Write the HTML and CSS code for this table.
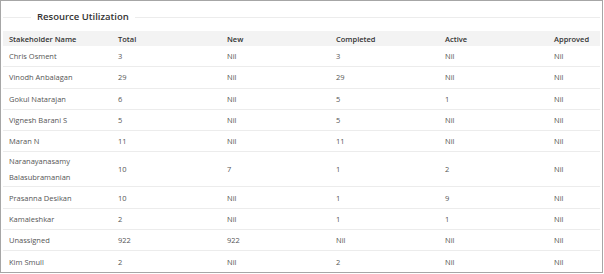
FILE: index.html
```html
<!DOCTYPE html>
<html>
<head>
<meta charset="utf-8">
<link rel="stylesheet" href="styles.css">
</head>
<body>
<div class="frame">
  <fieldset class="panel">
    <legend class="title">Resource Utilization</legend>
    <table class="grid">
      <colgroup>
        <col class="c"><col class="c"><col class="c"><col class="c"><col class="c"><col>
      </colgroup>
      <thead>
        <tr><th>Stakeholder Name</th><th>Total</th><th>New</th><th>Completed</th><th>Active</th><th>Approved</th></tr>
      </thead>
      <tbody>
        <tr><td>Chris Osment</td><td>3</td><td>Nil</td><td>3</td><td>Nil</td><td>Nil</td></tr>
        <tr><td>Vinodh Anbalagan</td><td>29</td><td>Nil</td><td>29</td><td>Nil</td><td>Nil</td></tr>
        <tr><td>Gokul Natarajan</td><td>6</td><td>Nil</td><td>5</td><td>1</td><td>Nil</td></tr>
        <tr><td>Vignesh Barani S</td><td>5</td><td>Nil</td><td>5</td><td>Nil</td><td>Nil</td></tr>
        <tr><td>Maran N</td><td>11</td><td>Nil</td><td>11</td><td>Nil</td><td>Nil</td></tr>
        <tr class="tall"><td>Naranayanasamy<br>Balasubramanian</td><td>10</td><td>7</td><td>1</td><td>2</td><td>Nil</td></tr>
        <tr><td>Prasanna Desikan</td><td>10</td><td>Nil</td><td>1</td><td>9</td><td>Nil</td></tr>
        <tr><td>Kamaleshkar</td><td>2</td><td>Nil</td><td>1</td><td>1</td><td>Nil</td></tr>
        <tr><td>Unassigned</td><td>922</td><td>922</td><td>Nil</td><td>Nil</td><td>Nil</td></tr>
        <tr><td>Kim Smull</td><td>2</td><td>Nil</td><td>2</td><td>Nil</td><td>Nil</td></tr>
      </tbody>
    </table>
  </fieldset>
</div>
</body>
</html>
```
FILE: styles.css
```css
html, body {
  margin: 0;
  padding: 0;
  background: #ffffff;
}
body {
  font-family: "Open Sans", "Noto Sans", sans-serif;
  width: 604px;
  height: 274px;
  overflow: hidden;
}
.frame {
  box-sizing: border-box;
  width: 603px;
  height: 273px;
  border: 1px solid #a6a6a6;
  padding: 0 2px;
  overflow: hidden;
}
.panel {
  margin: 0;
  padding: 0;
  border: none;
  border-top: 1px solid #ececec;
  margin-top: 10px;
  min-width: 0;
}
.title {
  margin-left: 28px;
  padding: 0 6px 0 6px;
  font-size: 9.5px;
  font-weight: 600;
  color: #333333;
  line-height: 12px;
}
.grid {
  width: 100%;
  border-collapse: collapse;
  table-layout: fixed;
  margin-top: 8px;
}
.grid col.c {
  width: 109px;
}
.grid th {
  background: #f3f3f3;
  text-align: left;
  font-weight: 600;
  font-size: 7.5px;
  color: #333333;
  height: 15px;
  padding: 0 6px;
}
.grid td {
  font-size: 7.5px;
  color: #555555;
  padding: 0 6px;
  height: 20.3px;
  border-bottom: 1px solid #ececec;
  line-height: 16px;
}
.grid tbody tr:last-child td {
  border-bottom: none;
}
.grid tr.tall td {
  height: 34px;
}
```
